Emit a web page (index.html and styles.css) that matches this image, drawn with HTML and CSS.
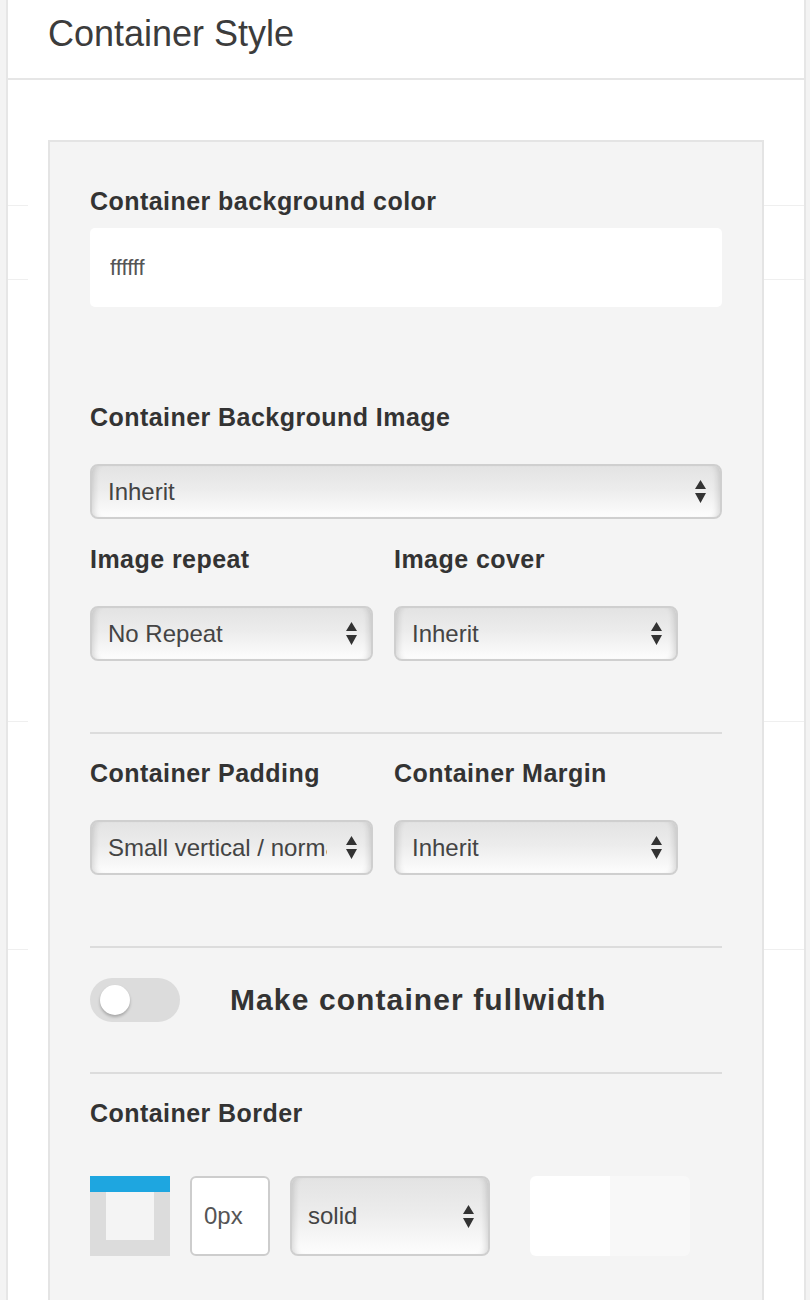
FILE: index.html
```html
<!DOCTYPE html>
<html lang="en">
<head>
  <meta charset="UTF-8" />
  <title>Container Style</title>
  <meta name="viewport" content="width=device-width, initial-scale=1.0" />
  <link rel="stylesheet" href="styles.css">
</head>
<body>
  <div class="card">
    <div class="card-head">
      <h2>Container Style</h2>
    </div>

    <div class="card-body">
      <!-- rows of the list behind the panel -->
      <div class="row-line line-1"></div>
      <div class="row-line line-2"></div>
      <div class="row-line line-3"></div>
      <div class="row-line line-4"></div>

      <div class="panel">
        <label class="label first">Container background color</label>
        <input class="text-input" value="ffffff" />

        <label class="label bg-image">Container Background Image</label>
        <div class="select full">
          <span class="select-text">Inherit</span>
          <svg class="arrows" width="11" height="23" viewBox="0 0 11 23"><path d="M5.5 0 L11 9 L0 9 Z M0 13 L11 13 L5.5 23 Z" fill="#333"/></svg>
        </div>

        <div class="cols row-a">
          <div class="col">
            <label class="label">Image repeat</label>
            <div class="select">
              <span class="select-text">No Repeat</span>
              <svg class="arrows" width="11" height="23" viewBox="0 0 11 23"><path d="M5.5 0 L11 9 L0 9 Z M0 13 L11 13 L5.5 23 Z" fill="#333"/></svg>
            </div>
          </div>
          <div class="col">
            <label class="label">Image cover</label>
            <div class="select">
              <span class="select-text">Inherit</span>
              <svg class="arrows" width="11" height="23" viewBox="0 0 11 23"><path d="M5.5 0 L11 9 L0 9 Z M0 13 L11 13 L5.5 23 Z" fill="#333"/></svg>
            </div>
          </div>
        </div>

        <hr class="divider" />

        <div class="cols row-b">
          <div class="col">
            <label class="label">Container Padding</label>
            <div class="select">
              <span class="select-text clip">Small vertical / normal horizontal</span>
              <svg class="arrows" width="11" height="23" viewBox="0 0 11 23"><path d="M5.5 0 L11 9 L0 9 Z M0 13 L11 13 L5.5 23 Z" fill="#333"/></svg>
            </div>
          </div>
          <div class="col">
            <label class="label">Container Margin</label>
            <div class="select">
              <span class="select-text">Inherit</span>
              <svg class="arrows" width="11" height="23" viewBox="0 0 11 23"><path d="M5.5 0 L11 9 L0 9 Z M0 13 L11 13 L5.5 23 Z" fill="#333"/></svg>
            </div>
          </div>
        </div>

        <hr class="divider" />

        <div class="toggle-row">
          <div class="toggle"><span class="knob"></span></div>
          <span class="toggle-label">Make container fullwidth</span>
        </div>

        <hr class="divider after-toggle" />

        <label class="label border-label">Container Border</label>
        <div class="border-row">
          <div class="border-icon"><span class="border-inner"></span></div>
          <input class="px-input" value="0px" />
          <div class="select style-select">
            <span class="select-text">solid</span>
            <svg class="arrows" width="11" height="23" viewBox="0 0 11 23"><path d="M5.5 0 L11 9 L0 9 Z M0 13 L11 13 L5.5 23 Z" fill="#333"/></svg>
          </div>
          <div class="swatch"></div>
        </div>
      </div>
    </div>
  </div>
</body>
</html>
```

FILE: styles.css
```css
* {
  box-sizing: border-box;
  font-family: 'Liberation Sans', Arial, Helvetica, sans-serif;
  margin: 0;
  padding: 0;
}

body {
  background-color: #f3f3f3;
  color: #333;
  width: 810px;
  height: 1300px;
  overflow: hidden;
}

.card {
  background-color: #fff;
  margin: 0 4px 0 6px;
  border-left: 2px solid #e6e6e6;
  border-right: 2px solid #e6e6e6;
  min-height: 1300px;
}

.card-head {
  height: 80px;
  padding: 12px 40px 0;
  border-bottom: 2px solid #e6e6e6;
}

.card-head h2 {
  font-size: 36px;
  line-height: 44px;
  font-weight: normal;
  color: #3c3c3c;
}

.card-body {
  position: relative;
  padding: 60px 40px 0;
}

.row-line {
  position: absolute;
  left: 0;
  right: 0;
  height: 1px;
  background: linear-gradient(to right, #efefef 20px, transparent 20px, transparent calc(100% - 40px), #efefef calc(100% - 40px));
}

.line-1 { top: 125px; }
.line-2 { top: 199px; }
.line-3 { top: 641px; }
.line-4 { top: 869px; }

.panel {
  position: relative;
  background-color: #f4f4f4;
  border: 2px solid #e4e4e4;
  border-bottom: none;
  padding: 44px 40px 80px;
}

.label {
  display: block;
  font-size: 25px;
  line-height: 30px;
  font-weight: bold;
  letter-spacing: 0.45px;
  color: #333;
  white-space: nowrap;
}

.text-input {
  display: block;
  width: 100%;
  height: 79px;
  margin-top: 12px;
  padding: 0 20px;
  border: none;
  border-radius: 5px;
  background-color: #fff;
  color: #555;
  font-size: 22px;
  outline: none;
}

.label.bg-image {
  margin-top: 95px;
}

.select {
  display: flex;
  align-items: center;
  width: 283px;
  height: 55px;
  margin-top: 32px;
  padding: 0 14px 0 16px;
  border: 2px solid #cfcfcf;
  border-radius: 8px;
  background: linear-gradient(#e3e3e3, #ececec 45%, #fdfdfd);
  box-shadow: inset 7px 0 6px -5px rgba(0, 0, 0, 0.14), inset -7px 0 6px -5px rgba(0, 0, 0, 0.14);
  color: #444;
}

.select.full {
  width: 100%;
}

.select-text {
  flex: 1;
  min-width: 0;
  overflow: hidden;
  white-space: nowrap;
  font-size: 24px;
  margin-right: 16px;
}

.select-text.clip {
  margin-right: 19px;
}

.arrows {
  flex-shrink: 0;
}

.cols {
  display: flex;
  gap: 21px;
}

.row-a {
  margin-top: 25px;
}

.row-b {
  margin-top: 24px;
}

.cols .col + .col .select {
  width: 284px;
}

.divider {
  border: none;
  height: 2px;
  background-color: #dcdcdc;
  margin-top: 71px;
}

.toggle-row {
  display: flex;
  align-items: center;
  gap: 50px;
  margin-top: 30px;
}

.toggle {
  display: flex;
  align-items: center;
  width: 90px;
  height: 44px;
  padding-left: 10px;
  border-radius: 22px;
  background-color: #dcdcdc;
}

.knob {
  width: 30px;
  height: 30px;
  border-radius: 50%;
  background-color: #fff;
  box-shadow: 0 2px 3px rgba(0, 0, 0, 0.25);
}

.toggle-label {
  font-size: 30px;
  font-weight: bold;
  letter-spacing: 1.1px;
  color: #333;
}

.divider.after-toggle {
  margin-top: 50px;
}

.label.border-label {
  margin-top: 24px;
}

.border-row {
  display: flex;
  align-items: center;
  margin-top: 48px;
}

.border-icon {
  display: flex;
  width: 80px;
  height: 80px;
  padding: 0 16px 16px;
  border-top: 16px solid #1ea6e0;
  background-color: #dcdcdc;
}

.border-inner {
  flex: 1;
  background-color: #f4f4f4;
}

.px-input {
  width: 80px;
  height: 80px;
  margin-left: 20px;
  padding: 0 12px;
  border: 2px solid #cdcdcd;
  border-radius: 6px;
  background-color: #fff;
  color: #555;
  font-size: 24px;
  outline: none;
}

.select.style-select {
  width: 200px;
  height: 80px;
  margin-top: 0;
  margin-left: 20px;
}

.swatch {
  width: 160px;
  height: 80px;
  margin-left: 40px;
  border-radius: 6px;
  background: linear-gradient(to right, #fff 50%, #f8f8f8 50%);
}
```
